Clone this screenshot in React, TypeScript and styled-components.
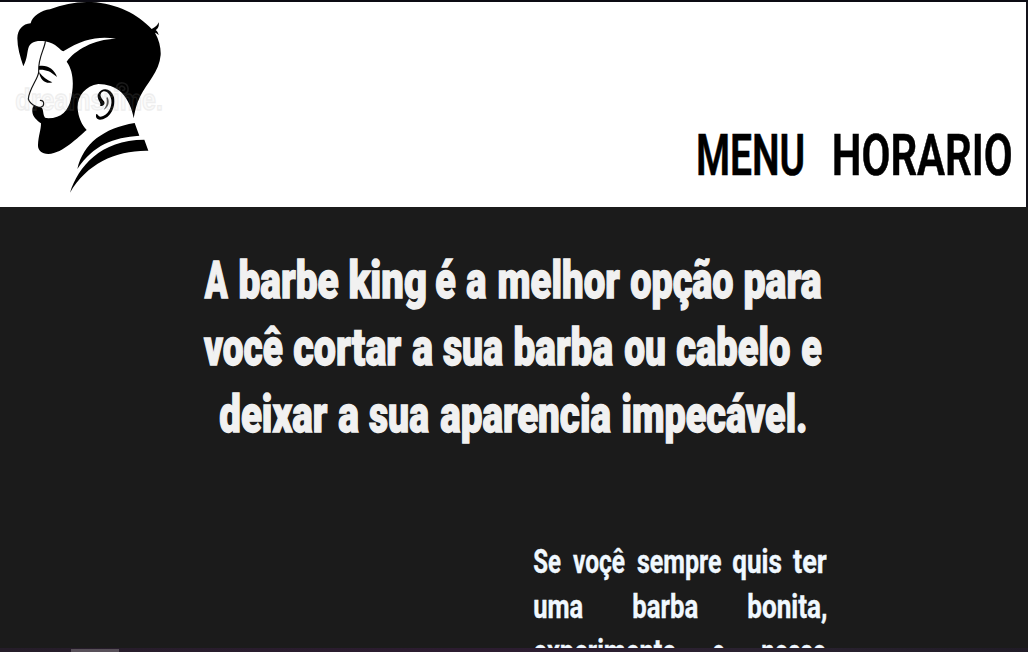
import { useLayoutEffect, useRef, useState } from 'react';
import styled, { createGlobalStyle } from 'styled-components';

const GlobalStyle = createGlobalStyle`
  * { box-sizing: border-box; }
  body { margin: 0; background: #1b1b1b; overflow: hidden; }
`;

const Page = styled.div`
  display: flex;
  flex-direction: column;
  width: 1028px;
  height: 652px;
  overflow: hidden;
  background: #1b1b1b;
  border-top: 2px solid #0c0b13;
  font-family: Roboto, 'Liberation Sans', sans-serif;
`;

const Header = styled.header`
  display: flex;
  justify-content: space-between;
  align-items: flex-start;
  flex: none;
  height: 205px;
  padding-right: 15px;
  background: #fff;
  border-right: 2px solid #14131a;
`;

const Logo = styled.svg`
  display: block;
  width: 180px;
  height: 205px;
`;

const Nav = styled.nav`
  padding-top: 123px;
`;

const Main = styled.main`
  flex: 1;
  min-height: 0;
  overflow: hidden;
`;

const Title = styled.h1`
  width: 618px;
  margin: 40px 0 0 204px;
`;

const Intro = styled.p`
  width: 293px;
  margin: 91px 0 0 533px;
`;

const Line = styled.span<{ $height: number; $indent?: number }>`
  display: flex;
  height: ${(p) => p.$height}px;
  padding-left: ${(p) => p.$indent ?? 0}px;
`;

const Slot = styled.span<{ $width: number; $gap: number }>`
  display: block;
  flex: none;
  width: ${(p) => p.$width}px;
  margin-left: ${(p) => p.$gap}px;
`;

type Face = { size: number; weight: number; color: string; stroke: number; height: number };

const Glyphs = styled.span<{ $face: Face }>`
  display: inline-block;
  transform-origin: 0 50%;
  white-space: pre;
  font-size: ${(p) => p.$face.size}px;
  font-weight: ${(p) => p.$face.weight};
  line-height: ${(p) => p.$face.height}px;
  color: ${(p) => p.$face.color};
  -webkit-text-stroke: ${(p) => p.$face.stroke}px ${(p) => p.$face.color};
`;

const ScrollTrack = styled.div`
  flex: none;
  height: 4px;
  padding: 1px 0 0 71px;
  background: linear-gradient(90deg, #251d29, #2c1c30 45%, #2a2230 75%, #201b26);
`;

const ScrollThumb = styled.div`
  width: 48px;
  height: 3px;
  background: #585059;
`;

const navFace: Face = { size: 57, weight: 600, color: '#000', stroke: 0.6, height: 62 };
const titleFace: Face = { size: 52, weight: 900, color: '#f1f1f1', stroke: 1.4, height: 67 };
const introFace: Face = { size: 33.5, weight: 700, color: '#f0f8ff', stroke: 0.4, height: 45 };

/** One condensed word, squeezed horizontally so that its ink fills `width`. */
function Word({ text, width, gap, face }: { text: string; width: number; gap: number; face: Face }) {
  const ref = useRef<HTMLSpanElement>(null);
  const [transform, setTransform] = useState('none');
  useLayoutEffect(() => {
    const ctx = document.createElement('canvas').getContext('2d');
    if (!ctx || !ref.current) return;
    ctx.font = `${face.weight} ${face.size}px ${getComputedStyle(ref.current).fontFamily}`;
    const m = ctx.measureText(text);
    const ink = m.actualBoundingBoxLeft + m.actualBoundingBoxRight;
    const k = width / ink;
    setTransform(`translateX(${m.actualBoundingBoxLeft * k}px) scaleX(${k})`);
  }, [text, width, face]);
  return (
    <Slot $width={width} $gap={gap}>
      <Glyphs ref={ref} $face={face} style={{ transform }}>{text}</Glyphs>
    </Slot>
  );
}

type Item = [text: string, start: number, end: number];

function Words({ items, origin, face }: { items: Item[]; origin: number; face: Face }) {
  return (
    <Line $height={face.height} $indent={items[0][1] - origin}>
      {items.map(([text, start, end], i) => (
        <Word key={i} text={text} width={end - start} gap={i ? start - items[i - 1][2] : 0} face={face} />
      ))}
    </Line>
  );
}

const titleLines: Item[][] = [
  [['A', 204, 228], ['barbe', 239.5, 338], ['king', 350, 425.5], ['é', 436, 455.5], ['a', 467, 486], ['melhor', 498.5, 619.5], ['opção', 630.5, 732], ['para', 745, 821]],
  [['você', 204, 282.5], ['cortar', 294, 401.5], ['a', 412.5, 432], ['sua', 443, 502.5], ['barba', 515, 612.5], ['ou', 625, 665], ['cabelo', 677, 789.5], ['e', 801.5, 821]],
  [['deixar', 220, 327.5], ['a', 338.5, 358], ['sua', 369, 428.5], ['aparencia', 440.5, 610], ['impecável.', 623, 805.5]],
];

const introLines: Item[][] = [
  [['Se', 533.5, 560.5], ['voçê', 572.5, 624.5], ['sempre', 636.5, 721], ['quis', 733, 781], ['ter', 792.5, 826]],
  [['uma', 533.5, 582], ['barba', 632.5, 697], ['bonita,', 747.5, 826]],
  [['experimente', 534, 676], ['o', 713, 724.5], ['nosso', 761.5, 825]],
];

function BarberLogo() {
  return (
    <Logo viewBox="0 6 540 615" role="img" aria-label="Barbe King">
      <path d="M70 199C60 170 52 142 52 115C53 88 68 72 92 70C96 49 125 30 150 28C190 12 235 5 275 6C350 10 414 43 455 87C466 82 473 75 476 67C478 77 475 85 467 90C472 94 475 99 476 106C472 101 468 98 465 98C478 120 483 145 482 165C478 215 440 250 420 290C410 310 404 335 401 355C397 328 385 300 365 278C345 260 320 252 295 252C255 258 231 290 233 325C235 352 244 373 260 390C235 410 190 460 145 462C124 462 113 450 114 435C115 408 123 390 123 370C110 360 98 350 97 335C96 325 99 319 103 316C110 322 120 321 125 323C131 328 128 342 135 353L145 355C185 355 205 330 212 300C222 260 222 215 200 185C225 150 280 118 348 116C300 108 250 115 190 154C180 152 170 130 135 124C110 120 90 125 85 145C80 165 82 175 70 199Z" />
      <g fill="none" stroke="#111" strokeWidth="3.5" strokeLinecap="round">
        <path d="M136 125C133 149 114 172 116 215C117 232 86 268 85 297C88 309 99 315 107 319C119 325 131 321 131 311C131 304 127 301 121 301" />
      </g>
      <path d="M117 198C140 193 164 207 171 231C151 213 137 208 117 209Z" />
      <path d="M117 216C129 231 141 241 157 247C137 253 121 241 117 216Z" />
      <path d="M293 284C305 260 333 263 342 292C348 329 325 359 300 359C289 358 286 350 289 342C294 342 294 350 302 350C323 347 337 322 334 300C330 274 311 268 304 278C297 288 307 296 312 304C317 314 309 319 300 318C306 309 291 300 293 284Z" />
      <path d="M323 292C331 308 323 325 311 329C319 318 323 307 319 293Z" fill="#555" />
      <path d="M232 507C250 430 310 385 404 369L418 407C340 412 280 435 232 507Z" />
      <path d="M210 578C235 500 300 420 433 419L445 452C350 450 260 490 210 578Z" />
      <g fill="#999" fillOpacity="0.3" stroke="#999" opacity="0.16">
        <text x="46" y="331" strokeWidth="4" fontFamily="Liberation Sans, sans-serif" fontWeight="700" fontSize="86" textLength="443" lengthAdjust="spacingAndGlyphs">dreamstime.</text>
        <path fill="none" strokeWidth="5" d="M353 276C344 257 356 247 369 249C388 253 389 278 373 282M361 272C354 263 363 256 370 260C378 265 373 274 367 270" />
      </g>
    </Logo>
  );
}

export default function App() {
  return (
    <>
      <GlobalStyle />
      <Page>
        <Header>
          <BarberLogo />
          <Nav>
            <Words items={[['MENU', 697.5, 803], ['HORARIO', 834, 1011]]} origin={697.5} face={navFace} />
          </Nav>
        </Header>
        <Main>
          <Title>
            {titleLines.map((items, i) => <Words key={i} items={items} origin={204} face={titleFace} />)}
          </Title>
          <Intro>
            {introLines.map((items, i) => <Words key={i} items={items} origin={533} face={introFace} />)}
          </Intro>
        </Main>
        <ScrollTrack><ScrollThumb /></ScrollTrack>
      </Page>
    </>
  );
}
